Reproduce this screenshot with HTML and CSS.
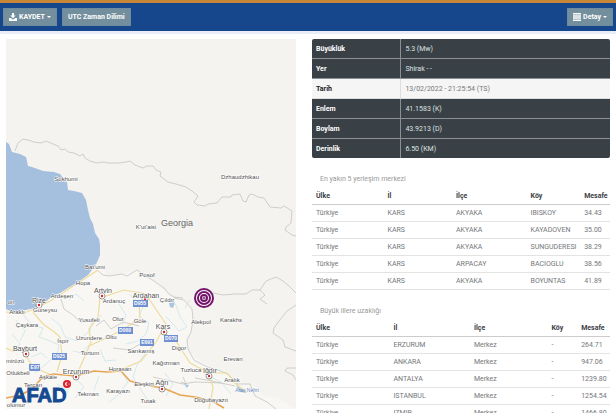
FILE: index.html
```html
<!DOCTYPE html>
<html lang="tr">
<head>
<meta charset="utf-8">
<meta name="viewport" content="width=device-width, initial-scale=1">
<title>AFAD Deprem</title>
<link rel="stylesheet" href="styles.css">
</head>
<body>
<header class="topbar">
  <button class="btn" type="button">
    <svg class="icon" viewBox="0 0 16 16" aria-hidden="true"><path d="M6 0h4v5h3.500L8 10.500 2.500 5H6zM0 10h4l2.500 2.500h3L12 10h4v6H0z"/></svg>
    KAYDET <span class="caret"></span>
  </button>
  <button class="btn" type="button">UTC Zaman Dilimi</button>
  <button class="btn btn-end" type="button">
    <svg class="icon" viewBox="0 0 16 16" aria-hidden="true"><path d="M0 0h16v3H0zM0 4.300h16v3H0zM0 8.600h16v3H0zM0 13h16v3H0z"/></svg>
    Detay <span class="caret"></span>
  </button>
</header>
<main class="content">
  <section class="map-panel">
    <svg class="map" viewBox="6 39 290 370" role="img" aria-label="Harita">
      <rect class="land" x="6" y="39" width="290" height="370"/>
      <path class="turkey" d="M98 265L88 275 73 285 60 293 50 298 40 307 30 309 6 311V409H296L288 404 278 398 263 396 255 386 237 383 225 374 207 366 190 353 187 341 191 330 193 318 191 307 184 300 172 298 164 290 151 279 137 270 122 274 109 276Z"/>
      <path class="sea" d="M6 142L9 144 12 152 20 154 26 157 28 166 32 167 43 171 54 172 60 174 65 180 67 182 68 190 74 191 82 193 86 200 88 210 90 218 93 224 95 233 99 239 100 245 100 255 98 260 95 266 88 275 78 282 68 288 60 293 50 298 40 307 30 309 22 311 15 313 6 309Z"/>
      <g class="border">
        <path d="M15 151L18 143 23 139 28 140 34 142 41 143 46 141 53 144 58 146 61 150 65 149 68 152 74 153 80 156 83 154 85 158 90 161 97 163 104 162 108 163 119 163 126 162 130 161 135 165 143 168 147 166 153 166 156 170 161 172 160 176 168 182 176 184 186 187 192 191 198 196 194 202 197 205 205 206 208 204 217 203 222 197 231 197 232 195 240 194 243 201 246 202 249 195 252 194 258 197 264 198 270 207 281 208 284 206 292 211 291 223 286 227 285 230 292 235 296 236"/>
        <path d="M97 270L103 275 109 276 122 274 127 276 137 270 145 276 151 279 164 288 169 294 174 297 183 298M213 293L223 295 235 294 246 294 252 290 260 290 266 281 276 277 283 281 290 287 296 293M260 290L265 295 260 299 267 304M296 305L287 311 279 321 274 328 273 333 283 340 285 347 296 351M296 368H287L285 371 293 375 296 380"/>
        <path d="M174 298L184 300 192 309 193 320 191 332 187 340 188 349 194 360 207 367 218 370 228 374 237 384 250 384 255 396 267 402 276 409M183 377L186 384 181 382M195 378L212 381 235 386M153 377L183 384 195 382 222 383M113 348L130 350 145 341M96 326L104 320 111 329 123 322 139 326M61 299L64 309 73 315 82 323"/>
      </g>
      <g class="water">
        <path d="M22 313L31 325 43 328 39 337 50 341 59 345 57 355M16 320L25 331 20 341M51 318L60 325 65 337 77 341 90 331 92 323 102 315M35 373L47 363 56 354M84 301L76 294 69 300M129 294L143 307 139 316 149 323 146 334 138 341 126 344M119 304L126 315 122 325M165 299L176 305 180 317 187 327M187 327L179 331 172 323 165 316M185 308L190 300M145 354L137 365 133 377 141 390 150 404M121 371L128 382 118 395 109 402M73 376L84 387 75 398M99 376L94 390M211 377L221 382 231 394M57 384L68 391 63 401M100 349L105 361 116 360M165 373L173 384 166 396M12 334L20 344 13 352M31 357L41 353 47 358M73 351L82 353 89 345"/>
      </g>
      <path class="lake" d="M169 303L175 302 173 308 170 307ZM236 385L247 393 240 392ZM184 384L189 385 187 388Z"/>
      <g class="road">
        <path d="M6 312L22 314 38 307 50 301 64 292 81 281 98 270M100 298L112 294 124 290 142 293M100 298L98 317 89 329 91 342 86 354 76 376M33 312L43 324 53 331 60 337 62 355 57 372M124 329L106 338 89 346M148 297L155 308 166 324 156 342 141 361 118 371M139 301L140 318 124 329M25 354L33 367 49 374M163 332L176 341 190 363 209 373 227 373 236 384 246 392M210 375L213 388 209 409M6 348L15 352"/>
      </g>
      <path class="road-orange" d="M6 398L21 395 32 389 43 377 53 374 76 376 94 371 107 372 121 371 130 381 150 386 163 388 180 395 195 397 212 401 224 408"/>
      <g class="town">
        <circle cx="39" cy="305" r="3"/><circle cx="102" cy="296" r="3"/><circle cx="145" cy="299" r="3"/><circle cx="26" cy="354" r="3"/><circle cx="76" cy="377" r="3"/><circle cx="164" cy="332" r="3"/><circle cx="209" cy="376" r="3"/><circle cx="162" cy="389" r="3"/>
      </g>
      <g class="town-dot">
        <circle cx="39" cy="305" r="1.200"/><circle cx="102" cy="296" r="1.200"/><circle cx="145" cy="299" r="1.200"/><circle cx="26" cy="354" r="1.200"/><circle cx="76" cy="377" r="1.200"/><circle cx="164" cy="332" r="1.200"/><circle cx="209" cy="376" r="1.200"/><circle cx="162" cy="389" r="1.200"/>
      </g>
      <g class="shield-box">
        <rect x="133" y="300" width="15" height="7"/><rect x="118" y="327" width="15" height="7"/><rect x="52" y="353" width="15" height="7"/><rect x="29" y="364" width="11" height="7"/><rect x="140" y="339" width="14" height="7"/><rect x="164" y="335" width="14" height="7"/>
      </g>
      <g class="shield">
        <text x="140" y="305">D955</text><text x="125" y="332">D060</text><text x="59" y="358">D925</text><text x="35" y="369">E97</text><text x="147" y="344">E691</text><text x="171" y="340">D070</text>
      </g>
      <g class="place">
        <text x="66" y="181">Sokhumi</text><text x="240" y="179">Dzhaudzhikau</text><text x="146" y="229">K'ut'aisi</text><text x="95" y="269">Bat'umi</text><text x="147" y="277">Posof</text>
        <text x="83" y="285">Hopa</text><text x="62" y="298">Ardeşen</text><text x="11" y="304">on</text><text x="17" y="314">Araklı</text><text x="45" y="312">Güneysu</text><text x="114" y="303">Ardanuç</text><text x="167" y="302">Çıldır</text>
        <text x="27" y="327">Çaykara</text><text x="89" y="322">Yusufeli</text><text x="118" y="321">Olur</text><text x="140" y="323">Göle</text><text x="63" y="343">İspir</text><text x="89" y="340">Uzundere</text><text x="111" y="339">Oltu</text><text x="90" y="355">Tortum</text>
        <text x="141" y="353">Sarıkamış</text><text x="15" y="363">mirözü</text><text x="18" y="375">Otlukbeli</text><text x="48" y="379">Aşkale</text><text x="120" y="371">Horasan</text><text x="144" y="386">Eleşkirt</text><text x="33" y="387">Tercan</text>
        <text x="118" y="393">Karayazı</text><text x="88" y="396">Tekman</text><text x="148" y="403">Tutak</text><text x="16" y="407">olumur</text><text x="201" y="324">Alekpol</text><text x="231" y="322">Karakhs</text><text x="179" y="350">Digor</text>
        <text x="166" y="365">Kağızman</text><text x="191" y="372">Tuzluca</text><text x="233" y="361">Erevan</text><text x="232" y="382">Aralık</text><text x="211" y="402">Doğubayazıt</text>
      </g>
      <g class="city">
        <text x="39" y="303">Rize</text><text x="103" y="293">Artvin</text><text x="146" y="298">Ardahan</text><text x="25" y="351">Bayburt</text><text x="76" y="374">Erzurum</text><text x="163" y="329">Kars</text><text x="210" y="373">Iğdır</text><text x="162" y="385">Ağrı</text>
      </g>
      <text class="river" x="247" y="392">Aras Nehri</text>
      <text class="country" x="177" y="226">Georgia</text>
      <g class="epicenter"><circle cx="204" cy="298" r="9"/><circle cx="204" cy="298" r="6"/><circle cx="204" cy="298" r="3"/><circle class="core" cx="204" cy="298" r="1"/></g>
      <text class="brand" x="12" y="402">AFAD</text>
      <path class="brand-house" d="M58.500 394L60.500 391.500 62.500 394V398.500H58.500Z"/>
      <circle class="badge" cx="67" cy="384" r="4"/>
      <path class="crescent" d="M68 382.300A2 2 0 1 0 68 385.700 1.600 1.600 0 1 1 68 382.300Z"/><circle class="star" cx="69" cy="384" r=".6"/>
    </svg>
  </section>
  <section class="details">
    <table class="summary">
      <tr><th scope="row">Büyüklük</th><td>5.3 (Mw)</td></tr>
      <tr><th scope="row">Yer</th><td>Shirak - -</td></tr>
      <tr class="light"><th scope="row">Tarih</th><td>13/02/2022 - 21:25:54 (TS)</td></tr>
      <tr><th scope="row">Enlem</th><td>41.1583 (K)</td></tr>
      <tr><th scope="row">Boylam</th><td>43.9213 (D)</td></tr>
      <tr><th scope="row">Derinlik</th><td>6.50 (KM)</td></tr>
    </table>
    <h2 class="title">En yakın 5 yerleşim merkezi</h2>
    <table class="list near">
      <thead><tr><th>Ülke</th><th>İl</th><th>İlçe</th><th>Köy</th><th>Mesafe</th></tr></thead>
      <tbody>
        <tr><td>Türkiye</td><td>KARS</td><td>AKYAKA</td><td>IBISKOY</td><td>34.43</td></tr>
        <tr><td>Türkiye</td><td>KARS</td><td>AKYAKA</td><td>KAYADOVEN</td><td>35.00</td></tr>
        <tr><td>Türkiye</td><td>KARS</td><td>AKYAKA</td><td>SUNGUDERESI</td><td>38.29</td></tr>
        <tr><td>Türkiye</td><td>KARS</td><td>ARPACAY</td><td>BACIOGLU</td><td>38.56</td></tr>
        <tr><td>Türkiye</td><td>KARS</td><td>AKYAKA</td><td>BOYUNTAS</td><td>41.89</td></tr>
      </tbody>
    </table>
    <h2 class="title">Büyük illere uzaklığı</h2>
    <table class="list far">
      <thead><tr><th>Ülke</th><th>İl</th><th>İlçe</th><th>Köy</th><th>Mesafe</th></tr></thead>
      <tbody>
        <tr><td>Türkiye</td><td>ERZURUM</td><td>Merkez</td><td>-</td><td>264.71</td></tr>
        <tr><td>Türkiye</td><td>ANKARA</td><td>Merkez</td><td>-</td><td>947.06</td></tr>
        <tr><td>Türkiye</td><td>ANTALYA</td><td>Merkez</td><td>-</td><td>1239.80</td></tr>
        <tr><td>Türkiye</td><td>ISTANBUL</td><td>Merkez</td><td>-</td><td>1254.54</td></tr>
        <tr><td>Türkiye</td><td>IZMIR</td><td>Merkez</td><td>-</td><td>1466.80</td></tr>
      </tbody>
    </table>
  </section>
</main>
</body>
</html>
```

FILE: styles.css
```css
* { box-sizing: border-box; }
html { scrollbar-width: none; }
body { margin: 0; background: #fff; color: #74777a; font: 7px/10px Roboto, "Noto Sans", sans-serif; }

.topbar { display: flex; align-items: center; gap: 5px; height: 34px; padding: 0 3px; background: #16468c; border-top: 3px solid #c68837; border-bottom: 3px solid #e8edf7; }
.btn { display: flex; align-items: center; gap: 2px; height: 18px; padding: 0 5px; border: 1px solid #6c8b9e; background: #738e9d; color: #fff; font: bold 7px/10px Roboto, sans-serif; cursor: pointer; }
.btn-end { margin-left: auto; }
.icon { width: 8px; height: 8px; fill: #fff; }
.caret { border: 2px solid transparent; border-top-color: #fff; border-bottom: 0; }

.content { display: grid; grid-template-columns: 290fr 298fr; gap: 16px; align-items: start; padding: 5px 6px; }
.map { display: block; width: 100%; font-family: "Liberation Sans", Arial, sans-serif; }
.land { fill: #f4f3ef; }
.turkey { fill: #f8f7f3; }
.sea { fill: #a5bfdf; }
.border { fill: none; stroke: #bdbdba; stroke-width: .7; }
.water { fill: none; stroke: #bcdfe8; stroke-width: .6; }
.lake { fill: #a9c5df; }
.road { fill: none; stroke: #eedb9c; stroke-width: 1.2; }
.road-orange { fill: none; stroke: #e5a553; stroke-width: 1.5; }
.town { fill: #fff; stroke: #555; stroke-width: .6; }
.town-dot { fill: #d6232a; }
.shield-box { fill: #6f90d2; }
.shield { fill: #fff; font-size: 5px; font-weight: bold; text-anchor: middle; }
.place, .city { fill: #505050; stroke: #fff; stroke-width: 1px; paint-order: stroke; text-anchor: middle; }
.place { font-size: 6px; }
.city { font-size: 7px; }
.country { fill: #666; font-size: 9px; text-anchor: middle; }
.river { fill: #6f90d2; font-size: 5px; text-anchor: middle; }
.epicenter { fill: #fff; stroke: #73146b; stroke-width: 2; }
.core { stroke-width: 1; }
.brand { fill: #154a92; stroke: #154a92; stroke-width: 1; font-size: 20px; font-weight: bold; }
.brand-house { fill: #fff; }
.badge { fill: #dc1f2b; }
.crescent, .star { fill: #fff; }

table { width: 100%; border-spacing: 0; border-collapse: separate; table-layout: fixed; }
th, td { padding: 0 4px; text-align: left; white-space: nowrap; }
.summary { border-radius: 2px; overflow: hidden; background: #394147; }
.summary th, .summary td { height: 20px; border-bottom: 1px solid #8b9094; color: #dfe1e2; }
.summary th { width: 30%; color: #fff; border-right: 1px solid #8b9094; }
.summary tr:last-child > * { height: 19px; border-bottom: 0; }
.summary .light > * { background: #f5f5f5; border-color: #ddd; color: #777; }
.summary .light th { color: #222; }

.title { margin: 12px 0 0; padding: 4px 8px; color: #999; font-size: 7px; font-weight: normal; line-height: 10px; }
.list th, .list td { height: 17px; border-bottom: 1px solid #e3e3e3; }
.list th { color: #3d4145; border-bottom-color: #ccc; }
.near th:nth-child(1) { width: 24%; }
.near th:nth-child(2) { width: 23%; }
.near th:nth-child(3) { width: 25%; }
.near th:nth-child(4) { width: 18%; }
.far th:nth-child(1) { width: 26%; }
.far th:nth-child(2) { width: 27%; }
.far th:nth-child(3) { width: 26%; }
.far th:nth-child(4) { width: 10%; }
```
